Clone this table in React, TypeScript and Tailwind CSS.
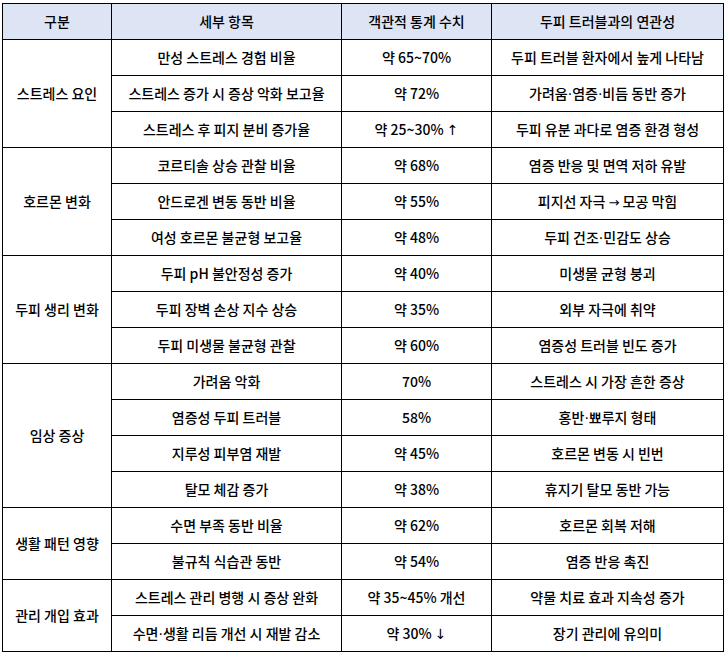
import React from "react";

type Group = { name: string; rows: [string, string, string][] };

const groups: Group[] = [
  {
    name: "스트레스 요인",
    rows: [
      ["만성 스트레스 경험 비율", "약 65~70%", "두피 트러블 환자에서 높게 나타남"],
      ["스트레스 증가 시 증상 악화 보고율", "약 72%", "가려움·염증·비듬 동반 증가"],
      ["스트레스 후 피지 분비 증가율", "약 25~30% ↑", "두피 유분 과다로 염증 환경 형성"],
    ],
  },
  {
    name: "호르몬 변화",
    rows: [
      ["코르티솔 상승 관찰 비율", "약 68%", "염증 반응 및 면역 저하 유발"],
      ["안드로겐 변동 동반 비율", "약 55%", "피지선 자극 → 모공 막힘"],
      ["여성 호르몬 불균형 보고율", "약 48%", "두피 건조·민감도 상승"],
    ],
  },
  {
    name: "두피 생리 변화",
    rows: [
      ["두피 pH 불안정성 증가", "약 40%", "미생물 균형 붕괴"],
      ["두피 장벽 손상 지수 상승", "약 35%", "외부 자극에 취약"],
      ["두피 미생물 불균형 관찰", "약 60%", "염증성 트러블 빈도 증가"],
    ],
  },
  {
    name: "임상 증상",
    rows: [
      ["가려움 악화", "70%", "스트레스 시 가장 흔한 증상"],
      ["염증성 두피 트러블", "58%", "홍반·뾰루지 형태"],
      ["지루성 피부염 재발", "약 45%", "호르몬 변동 시 빈번"],
      ["탈모 체감 증가", "약 38%", "휴지기 탈모 동반 가능"],
    ],
  },
  {
    name: "생활 패턴 영향",
    rows: [
      ["수면 부족 동반 비율", "약 62%", "호르몬 회복 저해"],
      ["불규칙 식습관 동반", "약 54%", "염증 반응 촉진"],
    ],
  },
  {
    name: "관리 개입 효과",
    rows: [
      ["스트레스 관리 병행 시 증상 완화", "약 35~45% 개선", "약물 치료 효과 지속성 증가"],
      ["수면·생활 리듬 개선 시 재발 감소", "약 30% ↓", "장기 관리에 유의미"],
    ],
  },
];

function T({ s }: { s: string }) {
  const parts = s.split(/([·↑↓→])/);
  return (
    <>
      {parts.map((p, i) =>
        p === "·" || p === "↑" || p === "↓" || p === "→" ? (
          <span
            key={i}
            style={{ fontFamily: '"DejaVu Sans", sans-serif' }}
            className={p === "·" ? "" : p === "→" ? "text-[13px]" : "text-[14px] font-normal"}
          >
            {p}
          </span>
        ) : (
          <React.Fragment key={i}>{p}</React.Fragment>
        )
      )}
    </>
  );
}

const cell = "border border-black text-center align-middle p-0 whitespace-nowrap";

export default function App() {
  return (
    <div
      className="w-[726px] h-[656px] bg-white pl-[2px] pt-[3px] text-black text-[14px] font-medium"
      style={{ fontFamily: '"Noto Sans CJK KR", "Noto Sans", sans-serif' }}
    >
      <table className="border-collapse table-fixed w-[721px]">
        <colgroup>
          <col className="w-[109px]" />
          <col className="w-[230px]" />
          <col className="w-[150px]" />
          <col className="w-[232px]" />
        </colgroup>
        <thead>
          <tr className="h-[36px] bg-[#dde5f4]">
            <th className={`${cell} font-medium`}>구분</th>
            <th className={`${cell} font-medium`}>세부 항목</th>
            <th className={`${cell} font-medium`}>객관적 통계 수치</th>
            <th className={`${cell} font-medium`}>두피 트러블과의 연관성</th>
          </tr>
        </thead>
        <tbody>
          {groups.map((g) =>
            g.rows.map((r, i) => (
              <tr key={g.name + i} className="h-[36px]">
                {i === 0 && (
                  <td className={cell} rowSpan={g.rows.length}>
                    {g.name}
                  </td>
                )}
                <td className={cell}>
                  <T s={r[0]} />
                </td>
                <td className={cell}>
                  <T s={r[1]} />
                </td>
                <td className={cell}>
                  <T s={r[2]} />
                </td>
              </tr>
            ))
          )}
        </tbody>
      </table>
    </div>
  );
}
